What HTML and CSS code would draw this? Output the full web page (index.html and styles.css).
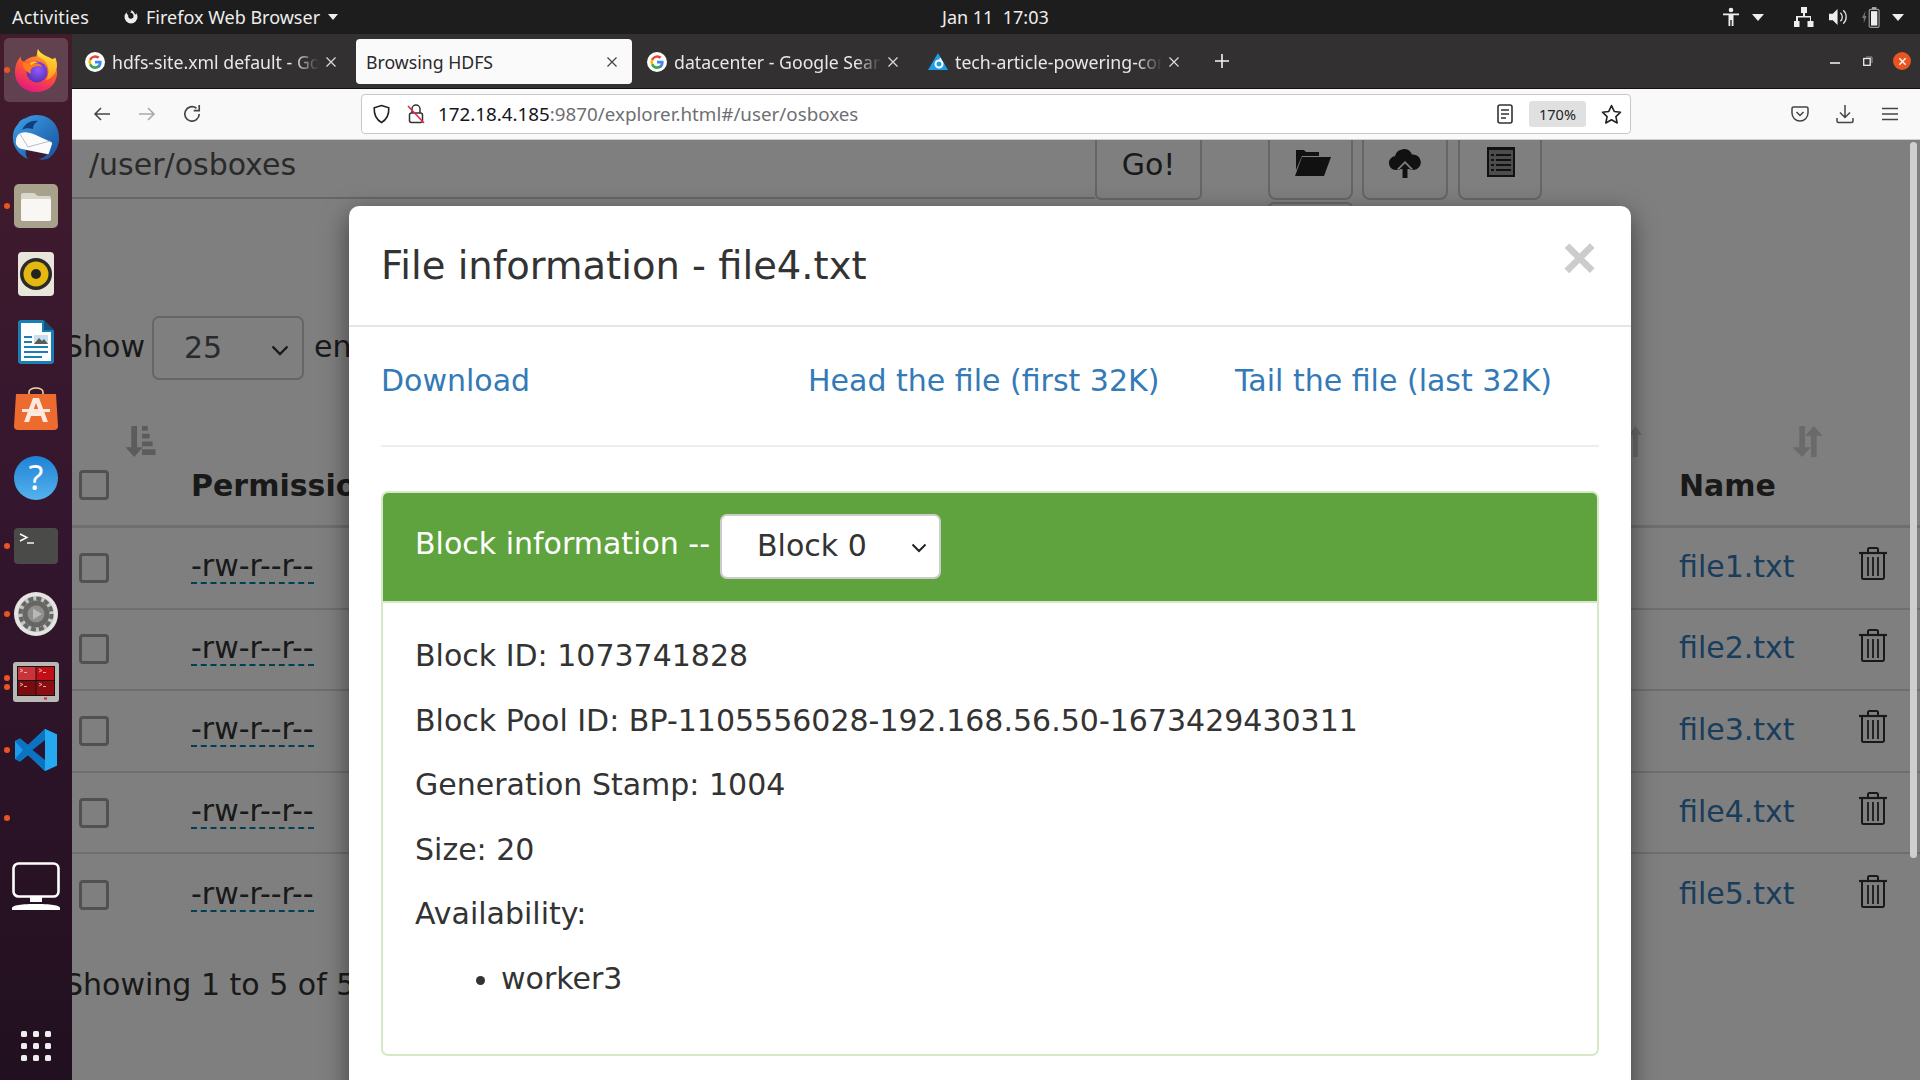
FILE: index.html
```html
<!DOCTYPE html>
<html lang="en">
<head>
<meta charset="utf-8">
<title>Browsing HDFS</title>
<link rel="stylesheet" href="styles.css">
</head>
<body>
<svg class="defs" aria-hidden="true">
  <symbol id="g-logo" viewBox="0 0 20 20">
    <circle cx="10" cy="10" r="10" fill="#fff"/>
    <path d="M16.6 10.2c0-.5 0-1-.1-1.400H10v2.700h3.700a3.200 3.200 0 0 1-1.400 2.100v1.800h2.300c1.300-1.300 2-3 2-5.200z" fill="#4285f4"/>
    <path d="M10 17c1.900 0 3.400-.6 4.600-1.700l-2.300-1.800c-.6.400-1.400.7-2.300.7-1.800 0-3.300-1.200-3.800-2.800H4.200v1.800A7 7 0 0 0 10 17z" fill="#34a853"/>
    <path d="M6.200 11.400a4.200 4.200 0 0 1 0-2.800V6.800H4.200a7 7 0 0 0 0 6.400z" fill="#fbbc05"/>
    <path d="M10 5.800c1 0 1.900.4 2.600 1l2-2A7 7 0 0 0 4.200 6.800l2 1.800C6.700 7 8.200 5.800 10 5.800z" fill="#ea4335"/>
  </symbol>
  <symbol id="tab-x" viewBox="0 0 12 12">
    <path d="M1.500 1.500l9 9M10.500 1.500l-9 9" stroke="currentColor" stroke-width="1.200" fill="none"/>
  </symbol>
  <symbol id="trash" viewBox="0 0 28 33">
    <path d="M0 6h28" stroke="currentColor" stroke-width="2.200"/>
    <path d="M9 6V2.500A1.500 1.500 0 0 1 10.500 1h7A1.500 1.500 0 0 1 19 2.500V6" fill="none" stroke="currentColor" stroke-width="2"/>
    <path d="M3 7v23.500A1.500 1.500 0 0 0 4.500 32h19a1.500 1.500 0 0 0 1.500-1.500V7" fill="none" stroke="currentColor" stroke-width="2"/>
    <path d="M9 10v19M14 10v19M19 10v19" stroke="currentColor" stroke-width="1.800"/>
  </symbol>
  <symbol id="caret" viewBox="0 0 12 7"><path d="M0 0h12L6 7z" fill="currentColor"/></symbol>
</svg>

<header class="topbar">
  <span class="top-activities">Activities</span>
  <span class="top-app">
    <svg class="top-ff" viewBox="0 0 16 16"><path d="M8 1.500a6.500 6.500 0 1 0 6.500 6.500c0-1.500-.5-2.900-1.400-4-.1 1-.6 1.500-1 1.700C11.700 3.500 10 2.400 8.500 1c.2 1.300-.4 2-1.500 2.600 1-.1 3.500.5 3.600 3.400a2.700 2.700 0 1 1-5.300-.6C4.500 5.800 4 5 4 4 3 5 2.900 3.200 4.500 2.500 5.500 1.900 7 1.500 8 1.500z" fill="#eee"/></svg>
    Firefox Web Browser
    <svg class="caret" width="10" height="6"><use href="#caret"/></svg>
  </span>
  <span class="top-clock">Jan 11&nbsp; 17:03</span>
  <span class="top-tray">
    <svg class="tray-a11y" viewBox="0 0 16 20"><circle cx="8" cy="3" r="2.300" fill="#eee"/><path d="M0 6.500h16v1.800h-5.500V19H8.700v-6H7.300v6H5.500V8.300H0z" fill="#eee"/></svg>
    <svg class="caret tray-c1" width="12" height="7"><use href="#caret"/></svg>
    <svg class="tray-net" viewBox="0 0 20 20"><path d="M7 0h6v6h-2v3h6v5h2.500v6h-6v-6H16v-3.500H4V14h1.500v6h-6v-6H2V9h7V6H7z" fill="#eee"/></svg>
    <svg class="tray-vol" viewBox="0 0 20 20"><path d="M0 6.500h4L9 1.500v17l-5-5H0z" fill="#eee"/><path d="M12 5.500a6 6 0 0 1 0 9M15 3a9.500 9.500 0 0 1 0 14" fill="none" stroke="#ddd" stroke-width="1.400"/></svg>
    <svg class="tray-bat" viewBox="0 0 20 24"><path d="M4 5L0 13h2v6l3-8H3z" fill="#777"/><rect x="8" y="3.500" width="11" height="20" rx="1.500" fill="none" stroke="#999" stroke-width="1.300"/><rect x="11" y="1" width="5" height="2.500" fill="#aaa"/><rect x="10" y="5.500" width="7" height="16" fill="#eee"/></svg>
    <svg class="caret tray-c2" width="12" height="7"><use href="#caret"/></svg>
  </span>
</header>

<div class="desktop">
  <nav class="dock">
    <div class="dock-item dock-active">
      <i class="dot"></i>
      <svg class="ico-44" viewBox="0 0 44 46">
        <defs>
          <linearGradient id="ff-b" x1="0.700" y1="0" x2="0.300" y2="1"><stop offset="0" stop-color="#ffbd2e"/><stop offset=".45" stop-color="#ff5a2c"/><stop offset="1" stop-color="#e31587"/></linearGradient>
          <linearGradient id="ff-y" x1="0.500" y1="0" x2="0.500" y2="1"><stop offset="0" stop-color="#ffe63c"/><stop offset="1" stop-color="#ff9a1e"/></linearGradient>
          <radialGradient id="ff-p" cx=".55" cy=".4" r=".7"><stop offset="0" stop-color="#9059ff"/><stop offset="1" stop-color="#4f2aa8"/></radialGradient>
        </defs>
        <path d="M24 1c1 5 5 7 9 10 5 4 10 8 11 14 .500 12-9 21-22 21C10 46 0 37 0 25 0 19 2 13 6 9c0 3 1 5 3 6 3-4 8-6 13-6 1-3 2-5 2-8z" fill="url(#ff-b)"/>
        <path d="M24 1c-1 4-1 7 2 9 6 3 9 8 9 14 0 4-1 7-3 10 7-2 12-9 12-16 0-3-1-6-2-8-1 1-3 2-4 1C35 9 27 7 24 1z" fill="url(#ff-y)"/>
        <circle cx="23" cy="25" r="11" fill="url(#ff-p)"/>
        <path d="M8 13c2 4 8 3 12 3 4 0 8 1 8 4-3-2-6-1-9 0-3 2-3 4-2 7-4-2-7-4-8-7-1-2-1-5-1-7z" fill="#ff7a1f"/>
        <path d="M16 16c2-2 6-2 9-1-3 0-6 1-8 3z" fill="#ffd23c"/>
      </svg>
    </div>
    <div class="dock-item">
      <svg class="ico-48" viewBox="0 0 48 48">
        <defs><linearGradient id="tb" x1="0" y1="0" x2="1" y2="1"><stop offset="0" stop-color="#3ea2e8"/><stop offset="1" stop-color="#164f9c"/></linearGradient></defs>
        <path d="M14 4C22-1 36 0 43 10c7 11 5 26-6 34-4 2-9 2-10 1 5-1 7-3 8-5L14 36c-1 3 0 6 2 9C6 41 0 31 1 22 1 17 3 13 6 10c2-4 5-5 8-6z" fill="url(#tb)"/>
        <path d="M9 19c6-2 13 1 19 4l11 5c1 0 1 1 1 2l-3 9c0 1-1 1-2 1L10 35c-4-1-7-4-6-9 0-3 2-6 5-7z" fill="#fbfbfb"/>
        <path d="M8 20l8 13 22-6" fill="none" stroke="#b9bec6" stroke-width="1"/>
        <path d="M10 16c3-7 10-10 16-9-3 2-5 4-5 8-4-1-8-1-11 1z" fill="#0f3f7f"/>
      </svg>
    </div>
    <div class="dock-item">
      <i class="dot"></i>
      <svg class="ico-44" viewBox="0 0 44 44">
        <rect width="44" height="44" rx="5" fill="#a8a28d"/>
        <path d="M7 11a2 2 0 0 1 2-2h11l4 3h11a2 2 0 0 1 2 2v21a2 2 0 0 1-2 2H9a2 2 0 0 1-2-2z" fill="#d9d6cb"/>
        <path d="M7 17a2 2 0 0 1 2-2h26a2 2 0 0 1 2 2v18a2 2 0 0 1-2 2H9a2 2 0 0 1-2-2z" fill="#f8f7f4"/>
      </svg>
    </div>
    <div class="dock-item">
      <svg class="ico-36x44" viewBox="0 0 36 44">
        <rect width="36" height="44" rx="4" fill="#e8e5da"/>
        <circle cx="18" cy="22" r="16" fill="#2b2a28"/>
        <circle cx="18" cy="22" r="12.500" fill="#e3b80f"/>
        <circle cx="18" cy="22" r="5" fill="#25231f"/>
      </svg>
    </div>
    <div class="dock-item">
      <svg class="ico-36x44" viewBox="0 0 36 44">
        <path d="M3 0h22l11 11v30a3 3 0 0 1-3 3H3a3 3 0 0 1-3-3V3a3 3 0 0 1 3-3z" fill="#1a7fb5"/>
        <path d="M3 3h21v9h9v29H3z" fill="#fff"/>
        <path d="M26 0l10 10-10 0z" fill="#14527c"/>
        <path d="M6 16h8v2H6zM6 21h8v2H6zM6 26h24v2H6zM6 31h24v2H6zM6 36h18v2H6z" fill="#1a7fb5"/>
        <rect x="16" y="15" width="14" height="9" fill="#c7e0ef"/>
        <path d="M16 24l5-6 3 3 2-2 4 5z" fill="#5a5a58"/>
      </svg>
    </div>
    <div class="dock-item">
      <svg class="ico-44 dock-up" viewBox="0 0 44 44">
        <path d="M15 8V5a7 4 0 0 1 14 0v3" fill="none" stroke="#f1d9a5" stroke-width="1.500"/>
        <path d="M2 7h40l2 32a4 4 0 0 1-4 4H4a4 4 0 0 1-4-4z" fill="#ed6b2f"/>
        <path d="M19 11h6l9 24h-5l-2-6H17l-2 6h-5zM19 24h6l-3-8z" fill="#fbe9df"/>
        <path d="M8 22h28v3H8z" fill="#fbe9df"/>
      </svg>
    </div>
    <div class="dock-item">
      <svg class="ico-44" viewBox="0 0 44 44">
        <defs><linearGradient id="hlp" x1="0" y1="0" x2="0" y2="1"><stop offset="0" stop-color="#1f82d6"/><stop offset="1" stop-color="#55b3ec"/></linearGradient></defs>
        <circle cx="22" cy="22" r="22" fill="url(#hlp)"/>
        <text x="22" y="34" class="ico-text-help">?</text>
      </svg>
    </div>
    <div class="dock-item">
      <i class="dot"></i>
      <svg class="ico-44x36" viewBox="0 0 44 36">
        <rect width="44" height="36" rx="4" fill="#4a4a48"/>
        <path d="M6 6l7 3.500-7 3.500" fill="none" stroke="#fff" stroke-width="1.400"/>
        <path d="M13 15h7" stroke="#fff" stroke-width="1.400"/>
      </svg>
    </div>
    <div class="dock-item">
      <i class="dot"></i>
      <svg class="ico-44" viewBox="0 0 44 44">
        <circle cx="22" cy="22" r="22" fill="#e4e4e2"/>
        <circle cx="22" cy="22" r="18" fill="#c4c4c2"/>
        <circle cx="22" cy="22" r="15.500" fill="none" stroke="#666664" stroke-width="4" stroke-dasharray="5 3.100"/>
        <circle cx="22" cy="22" r="13.500" fill="#666664"/>
        <circle cx="22" cy="22" r="8.500" fill="#8f8f8d"/>
        <path d="M19 16.500l9 5.500-9 5.500z" fill="#b8b8b6"/>
      </svg>
    </div>
    <div class="dock-item">
      <i class="dot dot-a"></i><i class="dot dot-b"></i>
      <svg class="ico-46x40" viewBox="0 0 46 40">
        <rect width="46" height="40" rx="3" fill="#b8b8b4"/>
        <rect x="4" y="4" width="38" height="30" fill="#141414"/>
        <rect x="5" y="5" width="17.500" height="13" fill="#c9333a"/>
        <rect x="23.500" y="5" width="17.500" height="13" fill="#c40e15"/>
        <rect x="5" y="19" width="17.500" height="14" fill="#7c0b0f"/>
        <rect x="23.500" y="19" width="17.500" height="14" fill="#8c0d12"/>
        <path d="M7 7l3 1.500L7 10M11 10.500h3M26 7l3 1.500L26 10M30 10.500h3M7 21l3 1.500L7 24M11 24.500h3M26 21l3 1.500L26 24M30 24.500h3" fill="none" stroke="#f3d0d0" stroke-width=".8"/>
        <rect x="31" y="35.500" width="3" height="2" fill="#d22"/>
      </svg>
    </div>
    <div class="dock-item">
      <i class="dot"></i>
      <svg class="ico-42" viewBox="0 0 42 42">
        <path d="M30 0l12 5.500v31L30 42 13 26 5 32.500 0 30V12l5-2.500 8 6.500z" fill="#1e9bea"/>
        <path d="M30 0L13 16 5 9.500 0 12l8 9-8 9 5 2.500 8-6.500 17 16z" fill="#0a74c2"/>
        <path d="M30 11L17.500 21 30 31z" fill="#2a1430"/>
        <path d="M30 0l12 5.500v31L30 42z" fill="#25aaf2"/>
      </svg>
    </div>
    <div class="dock-item"><i class="dot"></i></div>
    <div class="dock-item">
      <svg class="ico-48" viewBox="0 0 48 48">
        <rect x="1.500" y="1.500" width="45" height="33" rx="5" fill="none" stroke="#fff" stroke-width="2.600"/>
        <rect x="18" y="35" width="12" height="5" fill="#fff"/>
        <path d="M0 48v-2c0-2 6-4 24-4s24 2 24 4v2z" fill="#fff"/>
      </svg>
    </div>
    <div class="dock-grid">
      <i></i><i></i><i></i><i></i><i></i><i></i><i></i><i></i><i></i>
    </div>
  </nav>

  <main class="window">
    <div class="tabbar">
      <div class="tab">
        <svg class="fav"><use href="#g-logo"/></svg>
        <span class="tab-title">hdfs-site.xml default - Google</span>
        <svg class="tab-close"><use href="#tab-x"/></svg>
      </div>
      <div class="tab tab-active">
        <span class="tab-title">Browsing HDFS</span>
        <svg class="tab-close"><use href="#tab-x"/></svg>
      </div>
      <div class="tab">
        <svg class="fav"><use href="#g-logo"/></svg>
        <span class="tab-title">datacenter - Google Search</span>
        <svg class="tab-close"><use href="#tab-x"/></svg>
      </div>
      <div class="tab">
        <svg class="fav" viewBox="0 0 20 20"><path d="M10 1l10 17H0z" fill="#1a9fe8"/><circle cx="11" cy="12" r="3.500" fill="none" stroke="#fff" stroke-width="2"/><path d="M12 6l2 5" stroke="#fff" stroke-width="1.500"/></svg>
        <span class="tab-title">tech-article-powering-content</span>
        <svg class="tab-close"><use href="#tab-x"/></svg>
      </div>
      <svg class="tab-plus" viewBox="0 0 16 16"><path d="M8 1v14M1 8h14" stroke="#f4f4f4" stroke-width="1.600"/></svg>
      <div class="winctl">
        <svg class="win-min" viewBox="0 0 10 2"><path d="M0 1h10" stroke="#eee" stroke-width="1.600"/></svg>
        <svg class="win-max" viewBox="0 0 10 10"><rect x="0.700" y="2.500" width="6.500" height="6.800" fill="none" stroke="#eee" stroke-width="1.300"/><path d="M3 1h6v6" fill="none" stroke="#999" stroke-width="1"/></svg>
        <span class="win-close"><svg viewBox="0 0 10 10"><path d="M1.500 1.500l7 7M8.500 1.500l-7 7" stroke="#fff" stroke-width="1.500"/></svg></span>
      </div>
    </div>

    <div class="navbar">
      <svg class="nav-ico nav-back" viewBox="0 0 18 16"><path d="M17 8H2M8 2L2 8l6 6" fill="none" stroke="#444" stroke-width="1.500"/></svg>
      <svg class="nav-ico nav-fwd" viewBox="0 0 18 16"><path d="M1 8h15M10 2l6 6-6 6" fill="none" stroke="#a8a8a8" stroke-width="1.500"/></svg>
      <svg class="nav-ico nav-reload" viewBox="0 0 18 18"><path d="M15.500 9A6.500 6.500 0 1 1 13 3.800" fill="none" stroke="#444" stroke-width="1.500"/><path d="M15.500 1v5h-5" fill="none" stroke="#444" stroke-width="1.500"/></svg>
      <div class="urlbar">
        <svg class="url-shield" viewBox="0 0 18 20"><path d="M9 1.500l7.300 2.300c.3 6.700-1.800 11.700-7.300 14.700C3.500 15.500 1.400 10.500 1.700 3.800z" fill="none" stroke="#222" stroke-width="1.600"/></svg>
        <svg class="url-lock" viewBox="0 0 18 20"><path d="M5 9V5a4 4 0 0 1 8 0v4" fill="none" stroke="#333" stroke-width="1.500"/><rect x="2.500" y="9" width="13" height="9.500" rx="2" fill="none" stroke="#333" stroke-width="1.500"/><path d="M1 2l16 17" stroke="#e22850" stroke-width="1.600"/></svg>
        <span class="url-text"><b class="url-host">172.18.4.185</b>:9870/explorer.html#/user/osboxes</span>
        <svg class="url-reader" viewBox="0 0 16 20"><rect x="1" y="1" width="14" height="18" rx="2" fill="none" stroke="#333" stroke-width="1.600"/><path d="M4 6h8M4 10h8M4 14h5" stroke="#333" stroke-width="1.500"/></svg>
        <span class="url-zoom">170%</span>
        <svg class="url-star" viewBox="0 0 20 20"><path d="M10 1.500l2.600 5.600 6 .7-4.400 4.200 1.200 6.100L10 15l-5.400 3.100 1.200-6.100L1.400 7.800l6-.7z" fill="none" stroke="#222" stroke-width="1.500" stroke-linejoin="round"/></svg>
      </div>
      <svg class="nav-pocket" viewBox="0 0 18 18"><path d="M2.500 2h13A1.500 1.500 0 0 1 17 3.500V8a8 8 0 0 1-16 0V3.500A1.500 1.500 0 0 1 2.500 2z" fill="none" stroke="#444" stroke-width="1.500"/><path d="M5.500 7L9 10.500 12.500 7" fill="none" stroke="#444" stroke-width="1.500"/></svg>
      <svg class="nav-dl" viewBox="0 0 18 20"><path d="M9 1v12M4 8.500L9 13.500l5-5" fill="none" stroke="#444" stroke-width="1.500"/><path d="M1 14v3a1.500 1.500 0 0 0 1.500 1.500h13A1.500 1.500 0 0 0 17 17v-3" fill="none" stroke="#444" stroke-width="1.500"/></svg>
      <svg class="nav-menu" viewBox="0 0 16 14"><path d="M0 1.500h16M0 7h16M0 12.500h16" stroke="#444" stroke-width="1.500"/></svg>
    </div>

    <section class="page">
      <div class="toolbar">
        <div class="path-input">/user/osboxes</div>
        <div class="tool-go">Go!</div>
        <div class="tool-stack">
          <div class="tool-btn tool-folder">
            <svg viewBox="0 0 36 28"><path d="M1 4V2h8l2 2h13v4H7L1 22z" fill="#222"/><path d="M7 9h29l-7 19H0z" fill="#222"/></svg>
          </div>
          <div class="tool-stub"></div>
        </div>
        <div class="tool-btn tool-upload">
          <svg viewBox="0 0 32 30"><path d="M8 22a7 7 0 0 1-2-14A9 9 0 0 1 23 6.500 7.500 7.500 0 0 1 25 22h-4l-5-6-5 6z" fill="#222"/><path d="M16 13l8.500 8.500H20V30h-8v-8.500H7.500z" fill="#fff"/><path d="M16 15.500l5.500 5.500H18.500v9h-5v-9h-3z" fill="#222"/></svg>
        </div>
        <div class="tool-btn tool-list">
          <svg viewBox="0 0 28 30"><rect width="28" height="30" fill="#222"/><rect x="2" y="3" width="24" height="25" fill="#9a9a9a"/><path d="M4 7h3v2H4zM9 7h15v2H9zM4 12h3v2H4zM9 12h15v2H9zM4 17h3v2H4zM9 17h15v2H9zM4 22h3v2H4zM9 22h15v2H9z" fill="#222"/></svg>
        </div>
      </div>

      <div class="show-row">
        <span class="show-label">Show</span>
        <div class="show-select">25
          <svg class="chev" viewBox="0 0 18 11"><path d="M1.500 1.500L9 9l7.500-7.500" fill="none" stroke="#333" stroke-width="2.400"/></svg>
        </div>
        <span class="show-label">entries</span>
      </div>

      <div class="sort-row">
        <svg class="sort-first" viewBox="0 0 31 32"><path d="M6 0h6v22h6l-9 10-9-10h6z" fill="#b8b8b8"/><path d="M17 0h6v5h-6zM17 8h8v5h-8zM17 16h11v5H17zM17 24h14v6H17z" fill="#b8b8b8"/></svg>
        <svg class="sort-mid" viewBox="0 0 13 32"><path d="M6.500 0L13 9H9v23H4V9H0z" fill="#d4d4d4"/></svg>
        <svg class="sort-last" viewBox="0 0 31 32"><path d="M7 0h6v22h6l-9 10L0 22h7z" fill="#d4d4d4"/><path d="M19 32h6V10h6L22 0l-9 10h6z" fill="#d4d4d4"/></svg>
      </div>

      <div class="head-row">
        <i class="check"></i>
        <b>Permissions</b>
        <b>Name</b>
      </div>
      <div class="row"><i class="check"></i><span class="perm">-rw-r--r--</span><a class="file">file1.txt</a><svg class="del"><use href="#trash"/></svg></div>
      <div class="row"><i class="check"></i><span class="perm">-rw-r--r--</span><a class="file">file2.txt</a><svg class="del"><use href="#trash"/></svg></div>
      <div class="row"><i class="check"></i><span class="perm">-rw-r--r--</span><a class="file">file3.txt</a><svg class="del"><use href="#trash"/></svg></div>
      <div class="row"><i class="check"></i><span class="perm">-rw-r--r--</span><a class="file">file4.txt</a><svg class="del"><use href="#trash"/></svg></div>
      <div class="row row-last"><i class="check"></i><span class="perm">-rw-r--r--</span><a class="file">file5.txt</a><svg class="del"><use href="#trash"/></svg></div>

      <div class="showing">Showing 1 to 5 of 5 entries</div>

      <div class="backdrop"></div>

      <div class="modal">
        <div class="modal-head">
          <h4 class="modal-title">File information - file4.txt</h4>
          <span class="modal-close">×</span>
        </div>
        <div class="modal-body">
          <div class="links">
            <a>Download</a>
            <a>Head the file (first 32K)</a>
            <a>Tail the file (last 32K)</a>
          </div>
          <hr class="rule">
          <div class="panel">
            <div class="panel-head">
              <span>Block information --</span>
              <div class="block-select">Block 0
                <svg class="block-chev" viewBox="0 0 16 10"><path d="M1.500 1.500L8 8l6.500-6.500" fill="none" stroke="#222" stroke-width="2"/></svg>
              </div>
            </div>
            <div class="panel-body">
              <p>Block ID: 1073741828</p>
              <p>Block Pool ID: BP-1105556028-192.168.56.50-1673429430311</p>
              <p>Generation Stamp: 1004</p>
              <p>Size: 20</p>
              <p>Availability:</p>
              <ul><li>worker3</li></ul>
            </div>
          </div>
        </div>
      </div>

      <div class="scrollbar"><div class="thumb"></div></div>
    </section>
  </main>
</div>
</body>
</html>
```
FILE: styles.css
```css
* { box-sizing: border-box; }
html, body { margin: 0; height: 100%; overflow: hidden; }
body {
  width: 1920px; height: 1080px;
  display: flex; flex-direction: column;
  font-family: "Noto Sans", "DejaVu Sans", sans-serif;
  background: #000;
}
.defs { position: absolute; width: 0; height: 0; }

/* top bar */
.topbar {
  height: 34px; flex: none; background: #1d1d1d; color: #eee;
  display: flex; align-items: center; font-size: 18px; position: relative;
}
.top-activities { margin-left: 12px; width: 111px; letter-spacing: .2px; }
.top-app { display: flex; align-items: center; gap: 7px; }
.top-ff { width: 16px; height: 16px; }
.caret { color: #eee; margin-left: 1px; }
.top-clock { position: absolute; left: 942px; }
.top-tray { margin-left: auto; display: flex; align-items: center; }
.tray-a11y { width: 16px; height: 20px; margin-right: 12px; }
.tray-c1 { margin-right: 30px; }
.tray-net { width: 20px; height: 20px; margin-right: 15px; }
.tray-vol { width: 19px; height: 20px; margin-right: 14px; }
.tray-bat { width: 18px; height: 22px; margin-right: 11px; }
.tray-c2 { margin-right: 16px; }

.desktop { flex: 1; display: flex; min-height: 0; }

/* dock */
.dock {
  width: 72px; flex: none; padding-top: 2px;
  display: flex; flex-direction: column;
  background: linear-gradient(180deg, #431c2c 0%, #34162e 45%, #21101f 100%);
}
.dock-item {
  height: 68px; flex: none; position: relative;
  display: flex; align-items: center; justify-content: center;
}
.dock-active::before {
  content: ""; position: absolute; left: 4px; top: 2px; width: 64px; height: 64px;
  background: rgba(255,255,255,.17); border-radius: 5px;
}
.dock-item svg { position: relative; }
.dock-up { margin-bottom: 3px; }
.dot { position: absolute; left: 4px; top: 31px; width: 6px; height: 6px; border-radius: 50%; background: #e95420; }
.dot-a { top: 27px; }
.dot-b { top: 36px; }
.ico-44 { width: 44px; height: 44px; }
.ico-48 { width: 48px; height: 48px; }
.ico-36x44 { width: 36px; height: 44px; }
.ico-44x36 { width: 44px; height: 36px; }
.ico-46x40 { width: 46px; height: 40px; }
.ico-42 { width: 42px; height: 42px; }
.ico-text-help { font: 34px "Noto Sans", sans-serif; fill: #fff; text-anchor: middle; }
.dock-grid {
  margin: auto 0 19px 21px; width: 30px; height: 30px;
  display: grid; grid-template-columns: repeat(3, 6px); justify-content: space-between; align-content: space-between;
}
.dock-grid i { width: 6px; height: 6px; background: #eee; border-radius: 1.500px; }

/* browser */
.window { flex: 1; display: flex; flex-direction: column; min-width: 0; }
.tabbar {
  height: 55px; flex: none; background: #323031; border-bottom: 1px solid #111;
  display: flex; align-items: flex-start; padding: 5px 0 0 3px; position: relative;
  color: #e8e8e8; font-size: 17.700px;
}
.tab {
  width: 276px; height: 45px; margin-right: 5px; flex: none; border-radius: 4px;
  display: flex; align-items: center; padding: 0 14px 0 10px; gap: 7px;
}
.fav { width: 20px; height: 20px; flex: none; }
.tab-title {
  flex: 1; white-space: nowrap; overflow: hidden; min-width: 0; margin-right: -1px;
  -webkit-mask-image: linear-gradient(90deg, #000 88%, transparent);
  mask-image: linear-gradient(90deg, #000 88%, transparent);
}
.tab-close { width: 12px; height: 12px; flex: none; color: #ddd; }
.tab-active { background: #fafafa; color: #2a2a2e; }
.tab-active .tab-close { color: #444; }
.tab-active .tab-title { mask-image: none; -webkit-mask-image: none; }
.tab-plus { width: 16px; height: 16px; margin: 14px 0 0 15px; }
.winctl { position: absolute; right: 0; top: 0; bottom: 0; display: flex; align-items: center; }
.win-min { width: 10px; height: 2px; margin: 4px 0 0 0; }
.win-max { width: 10px; height: 10px; margin-left: 23px; }
.win-close {
  width: 18px; height: 18px; border-radius: 50%; background: #e95420; margin: 0 9px 0 20px;
  display: flex; align-items: center; justify-content: center;
}
.win-close svg { width: 9px; height: 9px; }

.navbar {
  height: 51px; flex: none; background: #f9f9fa; border-bottom: 1px solid #cfcfd0;
  display: flex; align-items: center;
}
.nav-ico { flex: none; }
.nav-back { width: 18px; height: 16px; margin-left: 21px; }
.nav-fwd { width: 18px; height: 16px; margin-left: 27px; }
.nav-reload { width: 20px; height: 20px; margin-left: 26px; }
.urlbar {
  margin-left: 159px; width: 1270px; height: 40px; background: #fff;
  border: 1px solid #c8c8c8; border-radius: 4px; flex: none;
  display: flex; align-items: center; position: relative;
}
.url-shield { width: 19px; height: 20px; margin-left: 10px; flex: none; }
.url-lock { width: 18px; height: 20px; margin-left: 16px; flex: none; }
.url-text { margin-left: 13px; font-size: 18.800px; color: #6f6f73; white-space: nowrap; flex: 1; }
.url-host { font-weight: 400; color: #16161a; }
.url-reader { width: 16px; height: 20px; flex: none; margin-right: 16px; }
.url-zoom {
  width: 57px; height: 26px; background: #e0e0e1; border-radius: 3px; flex: none;
  font-size: 14.500px; color: #222; display: flex; align-items: center; justify-content: center;
}
.url-star { width: 21px; height: 21px; margin: 0 8px 0 15px; flex: none; }
.nav-pocket { width: 18px; height: 18px; margin-left: 160px; flex: none; }
.nav-dl { width: 18px; height: 20px; margin-left: 27px; flex: none; }
.nav-menu { width: 16px; height: 14px; margin-left: 28px; flex: none; }

/* page under the dialog */
.page {
  flex: 1; position: relative; overflow: hidden; background: #fff; color: #333;
  font-family: "DejaVu Sans", sans-serif; font-size: 30px; line-height: 34px; min-height: 0;
}
.toolbar { display: flex; height: 66px; align-items: flex-start; }
.path-input {
  width: 1023px; height: 59px; padding: 8px 0 0 17px; border-bottom: 2px solid #ccc; color: #555;
  font-size: 30px;
}
.tool-go {
  width: 107px; height: 60px; border: 2px solid #ccc; border-top: 0; border-radius: 0 0 6px 6px;
  display: flex; align-items: center; justify-content: center; font-size: 30px; padding-bottom: 8px;
}
.tool-stack { margin-left: 66px; width: 85px; }
.tool-btn {
  height: 60px; border: 2px solid #ccc; border-top: 0; border-radius: 0 0 8px 8px;
  display: flex; align-items: flex-start; justify-content: center;
}
.tool-stub { height: 6px; margin-top: 2px; border: 2px solid #ccc; border-bottom: 0; border-radius: 8px 8px 0 0; }
.tool-upload { width: 86px; margin-left: 9px; }
.tool-list { width: 84px; margin-left: 10px; }
.tool-folder svg { width: 38px; height: 28px; margin: 8px 0 0 4px; }
.tool-upload svg { width: 32px; height: 30px; margin-top: 8px; }
.tool-list svg { width: 28px; height: 30px; margin: 7px 0 0 2px; }

.show-row { display: flex; align-items: center; height: 64px; margin: 110px 0 0 -8px; gap: 7px; }
.show-label { margin-bottom: 3px; }
.show-label + .show-select + .show-label { margin-left: 3px; }
.show-select {
  width: 152px; height: 64px; border: 2px solid #ccc; border-radius: 7px; color: #555; position: relative;
  display: flex; align-items: center; padding-left: 30px;
}
.chev { position: absolute; right: 13px; top: 27px; width: 18px; height: 11px; }
.sort-row { display: flex; height: 30px; margin-top: 46px; position: relative; }
.sort-first { width: 31px; height: 31px; margin-left: 53px; flex: none; }
.sort-mid { width: 13px; height: 31px; margin-left: 1473px; flex: none; }
.sort-last { width: 31px; height: 31px; margin-left: 150px; flex: none; }
.head-row, .row { display: grid; grid-template-columns: 119px 1488px 180px 1fr; align-items: center; }
.head-row { height: 72px; padding-bottom: 12px; border-bottom: 3px solid #ddd; color: #333; }
.head-row b { font-weight: 700; margin-top: 2px; }
.row { height: 81.600px; border-bottom: 2px solid #ddd; }
.row-last { border-bottom: 0; }
.check {
  display: block; width: 30px; height: 30px; margin-left: 7px;
  border: 3.500px solid #a3a3a8; border-radius: 4px; background: #fff;
}
.perm { justify-self: start; border-bottom: 2px dashed #0080a8; line-height: 32px; margin-bottom: 1px; }
.file { color: #337ab7; margin-bottom: 2px; }
.del { width: 28px; height: 33px; color: #333; margin-bottom: 8px; }
.showing { margin: 32px 0 0 -8px; white-space: nowrap; }

.backdrop { position: absolute; inset: 0; background: rgba(0,0,0,.5); }
.modal {
  position: absolute; left: 277px; top: 66px; width: 1282px; height: 1000px;
  background: #fff; border-radius: 10px; box-shadow: 0 8px 26px rgba(0,0,0,.5);
}
.modal-head { height: 121px; border-bottom: 2px solid #e5e5e5; padding: 0 32px; display: flex; justify-content: space-between; position: relative; }
.modal-title { margin: 38px 0 0; font-size: 38.500px; font-weight: 400; line-height: 44px; color: #333; }
.modal-close {
  position: absolute; right: 34px; top: 19px; font: 700 60px/66px "Liberation Sans", sans-serif; color: #cccccc;
}
.modal-body { padding: 0 32px 0 32px; }
.links { display: grid; grid-template-columns: 427px 427px 1fr; padding-top: 37px; color: #337ab7; }
.rule { border: 0; border-top: 2px solid #eee; margin: 47px 0 44px; }
.panel { border: 2px solid #d6e9c6; border-radius: 7px; height: 565px; overflow: hidden; }
.panel-head {
  height: 110px; background: #5fa33e; color: #fff; padding-left: 32px; border-bottom: 2px solid #d6e9c6;
  display: flex; align-items: center; gap: 10px;
}
.panel-head span { margin-bottom: 6px; }
.block-select {
  width: 221px; height: 65px; background: #fff; border: 2px solid #ccc; border-radius: 7px; color: #333;
  position: relative; display: flex; align-items: center; padding-left: 35px; font-size: 30px; margin-bottom: 2px;
}
.block-chev { position: absolute; right: 12px; top: 27px; width: 16px; height: 10px; }
.panel-body { padding: 36px 32px 0; }
.panel-body p { margin: 0 0 30.500px; line-height: 34px; }
.panel-body ul { margin: 0; padding-left: 86px; line-height: 34px; }

.scrollbar { position: absolute; right: 0; top: 0; bottom: 0; width: 13px; padding: 2px 3px 0 3px; }
.thumb { height: 716px; background: #cfcfcf; border-radius: 4px; }
```
